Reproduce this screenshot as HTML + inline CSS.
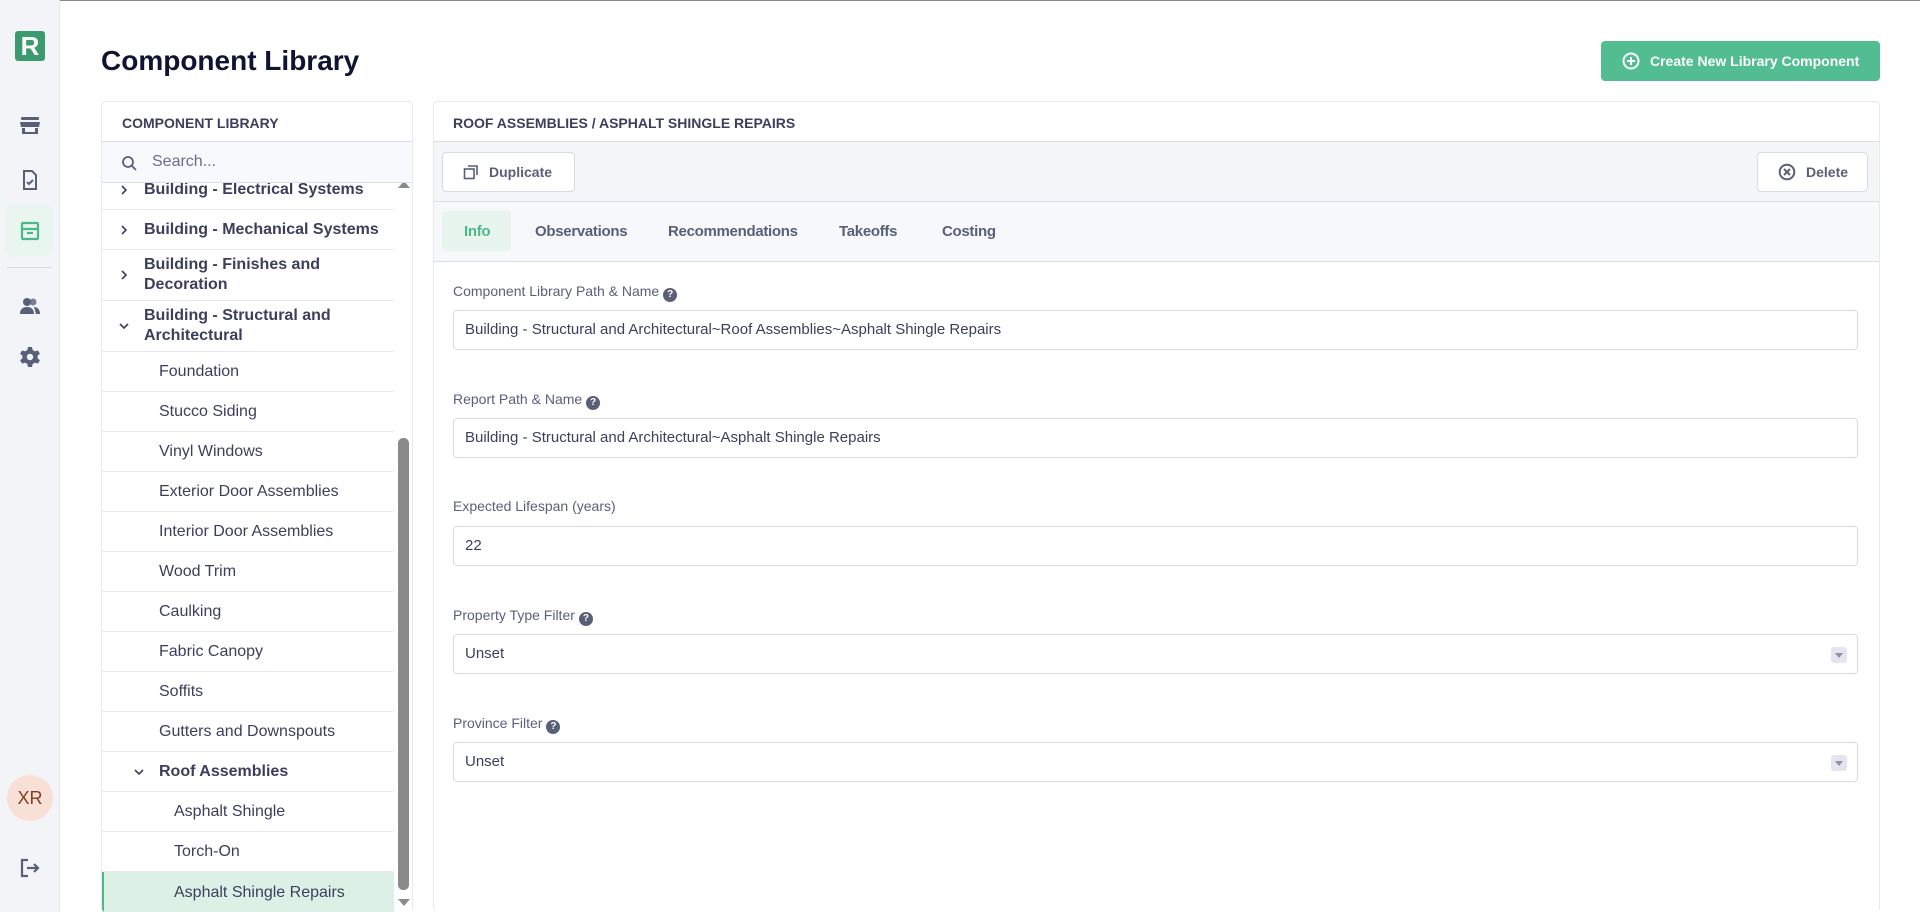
<!DOCTYPE html>
<html><head><meta charset="utf-8"><style>
*{box-sizing:border-box;margin:0;padding:0}
body{width:1920px;height:912px;overflow:hidden;background:#fff;font-family:"Liberation Sans",Arial,sans-serif;color:#3b3f5c;position:relative}
.abs{position:absolute}
.side{left:0;top:0;width:60px;height:912px;background:#f3f4f8;border-right:1px solid #e6e7ee}
.topline{left:0;top:0;width:1920px;height:1px;background:#8a8a8a}
.ic{position:absolute;left:18px;width:24px;height:24px}
.panel{border:1px solid #e8e9ef;border-radius:4px;background:#fff}
.row{position:absolute;left:0;width:292px;height:40px;border-bottom:1px solid #e8e9ef;font-size:16px;display:flex;align-items:center}
.b{font-weight:bold;color:#3b3f5c}
.chev{position:absolute;left:16px;top:50%;margin-top:-6px;width:12px;height:12px}
.lbl{position:absolute;left:453px;font-size:14px;color:#5a5f78}
.q{display:inline-block;width:14px;height:14px;border-radius:50%;background:#5a5f78;color:#fff;font-size:10px;font-weight:bold;text-align:center;line-height:14px;margin-left:4px;vertical-align:-1px}
.inp{position:absolute;left:453px;width:1405px;height:40px;border:1px solid #d8dae4;border-radius:4px;font-size:15px;padding-left:11px;line-height:38px;color:#3b3f5c}
.tab{position:absolute;top:223px;font-size:15px;color:#5a5f78;font-weight:bold;letter-spacing:-0.3px}
.btn{position:absolute;top:152px;height:40px;border:1px solid #d8dae4;border-radius:4px;background:#fff;font-size:14px;font-weight:bold;color:#5a5f78;display:flex;align-items:center}
.dd{position:absolute;right:10px;top:12px;width:16px;height:16px;background:#e4e5ee;border-radius:3px}
.dd:after{content:"";position:absolute;left:4px;top:6px;border-left:4px solid transparent;border-right:4px solid transparent;border-top:5px solid #8d90a8}
</style></head><body>
<svg width="0" height="0" style="position:absolute"><defs>
<symbol id="cr" viewBox="0 0 12 12"><path d="M4 2l4 4-4 4" fill="none" stroke="#3b3f5c" stroke-width="1.6"/></symbol>
<symbol id="cd" viewBox="0 0 12 12"><path d="M2 4l4 4 4-4" fill="none" stroke="#3b3f5c" stroke-width="1.6"/></symbol>
</defs></svg>
<div class="abs topline"></div>
<div class="abs side">
 <div class="abs" style="left:15px;top:31px;width:30px;height:30px;background:#3d9a6f;border-radius:3px;color:#fff;font-weight:bold;font-size:26px;text-align:center;line-height:30px">R</div>
 <svg class="ic" style="top:114px" viewBox="0 0 24 24" fill="#5a5f78"><rect x="3" y="3" width="18" height="3" rx="1"/><path d="M2 8h20l-1 5H3z"/><path d="M4 14h3v4h10v-4h3v6H4z"/></svg>
 <svg class="ic" style="top:168px" viewBox="0 0 24 24" fill="none" stroke="#5a5f78" stroke-width="2"><path d="M6 3h8l4 4v14H6z"/><path d="M9 14l2 2 4-4"/></svg>
 <div class="abs" style="left:5px;top:205px;width:48px;height:52px;background:#e9f5ef;border-radius:8px"></div>
 <svg class="ic" style="top:219px" viewBox="0 0 24 24" fill="none" stroke="#4cb88a" stroke-width="2.2"><rect x="4" y="4" width="16" height="16" rx="1"/><path d="M4 10h16M9 14h6"/></svg>
 <div class="abs" style="left:7px;top:267px;width:45px;height:1px;background:#d8dae4"></div>
 <svg class="ic" style="top:294px" viewBox="0 0 24 24" fill="#5a5f78"><circle cx="9" cy="8" r="4"/><path d="M2 20c0-5 3-7 7-7s7 2 7 7z"/><circle cx="15" cy="8" r="3.5" opacity=".8"/><path d="M16 13c3 0 6 2 6 7h-4z"/></svg>
 <svg class="ic" style="top:345px" viewBox="0 0 24 24" fill="#5a5f78"><path d="M10 2h4l.6 3 2.4 1.4 2.9-1 2 3.4-2.3 2v2.4l2.3 2-2 3.4-2.9-1L14.6 19 14 22h-4l-.6-3-2.4-1.4-2.9 1-2-3.4 2.3-2v-2.4l-2.3-2 2-3.4 2.9 1L9.4 5z"/><circle cx="12" cy="12" r="3.2" fill="#f3f4f8"/></svg>
 <div class="abs" style="left:7px;top:775px;width:46px;height:46px;border-radius:50%;background:#f8e0d6;color:#8a3b1e;font-size:18px;text-align:center;line-height:46px">XR</div>
 <svg class="ic" style="top:856px" viewBox="0 0 24 24" fill="none" stroke="#5a5f78" stroke-width="2.2"><path d="M10 4H4v16h6M9 12h11M16 8l4 4-4 4"/></svg>
</div>
<div class="abs" style="left:101px;top:45px;font-size:28px;font-weight:bold;color:#101433">Component Library</div>
<div class="abs" style="left:1601px;top:41px;width:279px;height:40px;background:#52bd91;border-radius:4px;color:#fff;font-size:14px;font-weight:bold;display:flex;align-items:center">
 <svg style="margin-left:21px;margin-right:10px" width="18" height="18" viewBox="0 0 18 18" fill="none" stroke="#fff" stroke-width="2"><circle cx="9" cy="9" r="7.5"/><path d="M9 5v8M5 9h8"/></svg>Create New Library Component</div>

<div class="abs panel" style="left:101px;top:101px;width:312px;height:811px;overflow:hidden;border-bottom:none">
 <div class="abs" style="left:0;top:0;width:312px;height:40px;border-bottom:1px solid #dcdee7;font-size:14px;font-weight:bold;padding:13px 0 0 20px">COMPONENT LIBRARY</div>
 <div class="abs" style="left:0;top:40px;width:312px;height:41px;background:#f8f9fd;border-bottom:1px solid #dcdee7;font-size:16px;color:#6a6e85;padding:11px 0 0 50px">Search...
  <svg class="abs" style="left:19px;top:13px" width="16" height="16" viewBox="0 0 16 16" fill="none" stroke="#5a5f78" stroke-width="1.8"><circle cx="7" cy="7" r="5"/><path d="M11 11l4 4"/></svg></div>
 <div class="abs" style="left:0;top:81px;width:312px;height:730px;overflow:hidden">
  <div class="row b" style="top:-13px;height:40px"><svg class="chev"><use href="#cr"/></svg><span style="margin-left:42px">Building - Electrical Systems</span></div>
  <div class="row b" style="top:27px"><svg class="chev"><use href="#cr"/></svg><span style="margin-left:42px">Building - Mechanical Systems</span></div>
  <div class="row b" style="top:67px;height:51px;line-height:20px"><svg class="chev"><use href="#cr"/></svg><span style="margin-left:42px">Building - Finishes and<br>Decoration</span></div>
  <div class="row b" style="top:118px;height:51px;line-height:20px"><svg class="chev"><use href="#cd"/></svg><span style="margin-left:42px">Building - Structural and<br>Architectural</span></div>
  <div class="row" style="top:169px"><span style="margin-left:57px">Foundation</span></div>
  <div class="row" style="top:209px"><span style="margin-left:57px">Stucco Siding</span></div>
  <div class="row" style="top:249px"><span style="margin-left:57px">Vinyl Windows</span></div>
  <div class="row" style="top:289px"><span style="margin-left:57px">Exterior Door Assemblies</span></div>
  <div class="row" style="top:329px"><span style="margin-left:57px">Interior Door Assemblies</span></div>
  <div class="row" style="top:369px"><span style="margin-left:57px">Wood Trim</span></div>
  <div class="row" style="top:409px"><span style="margin-left:57px">Caulking</span></div>
  <div class="row" style="top:449px"><span style="margin-left:57px">Fabric Canopy</span></div>
  <div class="row" style="top:489px"><span style="margin-left:57px">Soffits</span></div>
  <div class="row" style="top:529px"><span style="margin-left:57px">Gutters and Downspouts</span></div>
  <div class="row b" style="top:569px"><svg class="chev" style="left:31px"><use href="#cd"/></svg><span style="margin-left:57px">Roof Assemblies</span></div>
  <div class="row" style="top:609px"><span style="margin-left:72px">Asphalt Shingle</span></div>
  <div class="row" style="top:649px"><span style="margin-left:72px">Torch-On</span></div>
  <div class="row" style="top:689px;height:42px;background:#dcf0e6;border-left:2px solid #4cb88a"><span style="margin-left:70px">Asphalt Shingle Repairs</span></div>
  <div class="abs" style="left:294px;top:-13px;width:17px;height:760px;background:#fff"></div>
  <div class="abs" style="left:296px;top:-2px;border-left:6px solid transparent;border-right:6px solid transparent;border-bottom:7px solid #8a8a8a"></div>
  <div class="abs" style="left:296px;top:255px;width:11px;height:452px;background:#8a8a8a;border-radius:5px"></div>
  <div class="abs" style="left:296px;top:716px;border-left:6px solid transparent;border-right:6px solid transparent;border-top:7px solid #8a8a8a"></div>
 </div>
</div>

<div class="abs panel" style="left:433px;top:101px;width:1447px;height:811px;border-bottom:none">
 <div class="abs" style="left:0;top:0;width:100%;height:40px;border-bottom:1px solid #dcdee7;font-size:14px;font-weight:bold;padding:13px 0 0 19px">ROOF ASSEMBLIES / ASPHALT SHINGLE REPAIRS</div>
 <div class="abs" style="left:0;top:40px;width:100%;height:60px;background:#f4f5f9;border-bottom:1px solid #dcdee7"></div>
 <div class="abs" style="left:0;top:100px;width:100%;height:60px;background:#f7f8fb;border-bottom:1px solid #dcdee7"></div>
</div>
<div class="btn" style="left:442px;width:133px"><svg style="margin:0 10px 0 20px" width="16" height="16" viewBox="0 0 16 16" fill="none" stroke="#5a5f78" stroke-width="1.6"><rect x="1.5" y="5" width="9.5" height="9.5"/><path d="M5 2h9v9"/></svg>Duplicate</div>
<div class="btn" style="left:1757px;width:111px"><svg style="margin:0 10px 0 20px" width="18" height="18" viewBox="0 0 18 18" fill="none" stroke="#5a5f78" stroke-width="2"><circle cx="9" cy="9" r="7.3"/><path d="M6 6l6 6M12 6l-6 6"/></svg>Delete</div>
<div class="abs" style="left:442px;top:211px;width:69px;height:40px;background:#e8f5ef;border-radius:4px"></div>
<div class="tab" style="left:464px;color:#4cb88a">Info</div>
<div class="tab" style="left:535px">Observations</div>
<div class="tab" style="left:668px">Recommendations</div>
<div class="tab" style="left:839px">Takeoffs</div>
<div class="tab" style="left:942px">Costing</div>

<div class="lbl" style="top:283px">Component Library Path &amp; Name<span class="q">?</span></div>
<div class="inp" style="top:310px">Building - Structural and Architectural~Roof Assemblies~Asphalt Shingle Repairs</div>
<div class="lbl" style="top:391px">Report Path &amp; Name<span class="q">?</span></div>
<div class="inp" style="top:418px">Building - Structural and Architectural~Asphalt Shingle Repairs</div>
<div class="lbl" style="top:498px">Expected Lifespan (years)</div>
<div class="inp" style="top:526px">22</div>
<div class="lbl" style="top:607px">Property Type Filter<span class="q">?</span></div>
<div class="inp" style="top:634px">Unset<span class="dd"></span></div>
<div class="lbl" style="top:715px">Province Filter<span class="q">?</span></div>
<div class="inp" style="top:742px">Unset<span class="dd"></span></div>
</body></html>
